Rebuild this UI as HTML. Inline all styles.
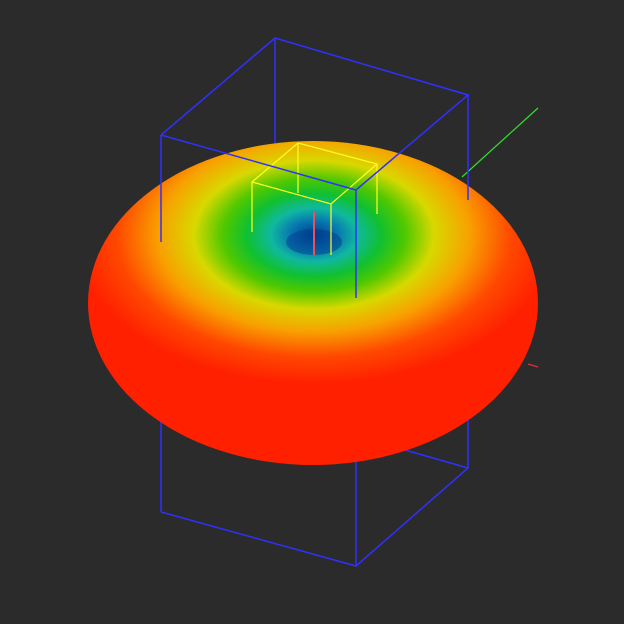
<!DOCTYPE html>
<html><head><style>html,body{margin:0;padding:0;background:#2b2b2b;}svg{display:block}</style></head>
<body><svg width="624" height="624" viewBox="0 0 624 624" xmlns="http://www.w3.org/2000/svg">
<defs>
<radialGradient id="g" gradientUnits="userSpaceOnUse" cx="314" cy="235" r="240" gradientTransform="translate(314 235) scale(1 0.62) translate(-314 -235)">
<stop offset="0" stop-color="#003c90"/>
<stop offset="0.1" stop-color="#0878b0"/>
<stop offset="0.18" stop-color="#10b8a0"/>
<stop offset="0.28" stop-color="#10c030"/>
<stop offset="0.38" stop-color="#50c800"/>
<stop offset="0.5" stop-color="#d8d800"/>
<stop offset="0.65" stop-color="#f8a000"/>
<stop offset="0.82" stop-color="#ff4800"/>
<stop offset="1" stop-color="#ff2000"/>
</radialGradient>
<clipPath id="c"><rect x="0" y="0" width="538" height="624"/></clipPath>
</defs>
<g stroke="#3030ff" stroke-width="1.5" fill="none">
<line x1="275" y1="38" x2="275" y2="145"/>
<line x1="161" y1="420" x2="161" y2="512"/>
<line x1="356" y1="460" x2="356" y2="566"/>
<line x1="468" y1="420" x2="468" y2="468"/>
<polyline points="161,512 356,566 468,468 405,450"/>
</g>
<g clip-path="url(#c)">
<ellipse cx="313" cy="303" rx="225" ry="162" fill="url(#g)"/>
</g>
<ellipse cx="314" cy="242" rx="28" ry="13" fill="#003c8c" opacity="0.5"/>
<line x1="462" y1="177" x2="538" y2="108" stroke="#30e030" stroke-width="1.2"/>
<line x1="528" y1="364" x2="538" y2="367" stroke="#e03030" stroke-width="1.2"/>
<line x1="314" y1="212" x2="314" y2="255" stroke="#f05050" stroke-width="2"/>
<g stroke="#ffff20" stroke-width="1.2" fill="none">
<polygon points="298,143 377,164 331,204 252,182"/>
<line x1="252" y1="182" x2="252" y2="232"/>
<line x1="331" y1="204" x2="331" y2="255"/>
<line x1="377" y1="164" x2="377" y2="214"/>
<line x1="298" y1="143" x2="298" y2="193"/>
</g>
<g stroke="#3030ff" stroke-width="1.5" fill="none">
<polyline points="161,135 275,38 468,95 356,190 161,135"/>
<line x1="161" y1="135" x2="161" y2="242"/>
<line x1="356" y1="190" x2="356" y2="298"/>
<line x1="468" y1="95" x2="468" y2="200"/>
</g>
</svg></body></html>
